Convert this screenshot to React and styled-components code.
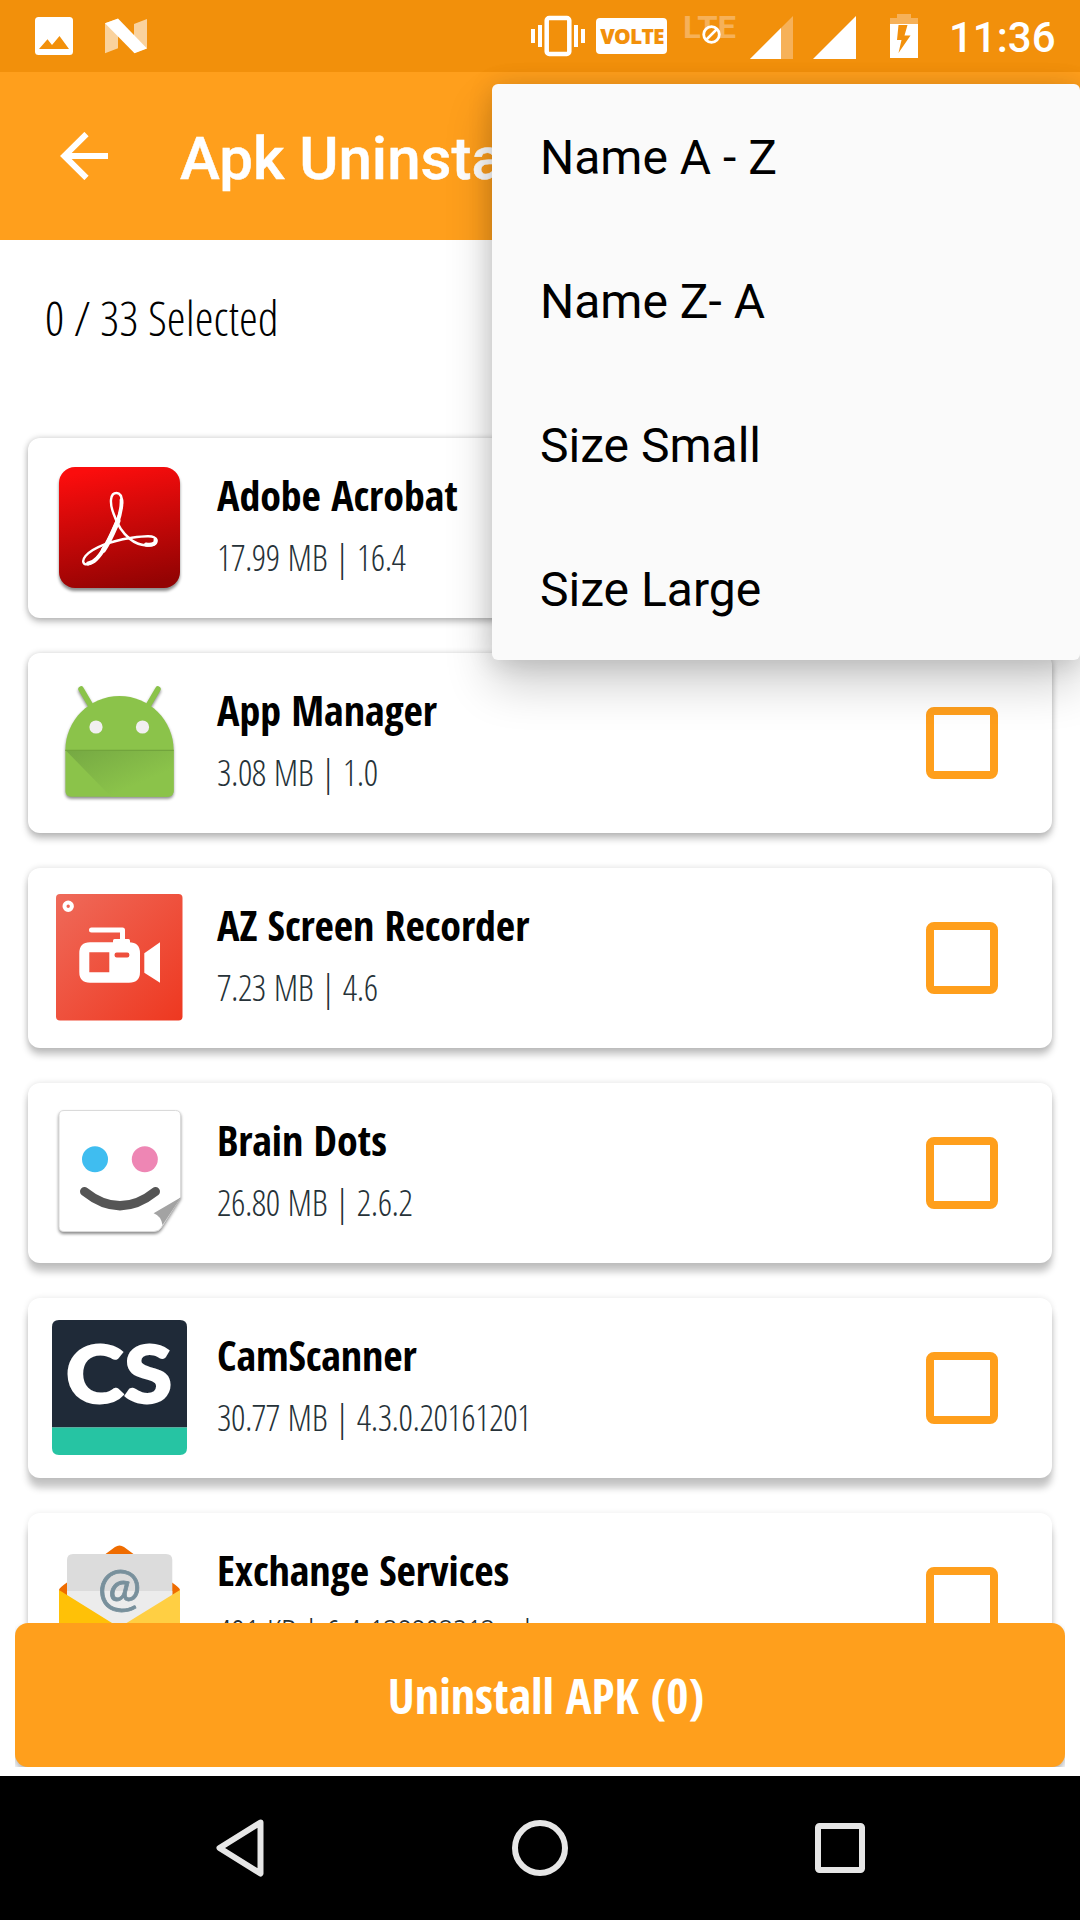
import React, { useState } from 'react';
import styled, { createGlobalStyle } from 'styled-components';

const ORANGE = "#FF9F1C";
const STATUS_ORANGE = "#F2900B";

const AdobeIcon = () => (
    <IconSvg viewBox="0 0 144 144">
        <defs>
            <linearGradient id="adobe" x1="0.4" y1="0" x2="0.6" y2="1">
                <stop offset="0" stopColor="#FB0D0D" />
                <stop offset="1" stopColor="#930303" />
            </linearGradient>
        </defs>
        <Raised $y={3}>
            <rect x="11" y="11" width="121" height="121" rx="16" fill="url(#adobe)" />
        </Raised>
        <g fill="none" stroke="#fff" strokeLinecap="round">
            <path strokeWidth="2.4" d="M68.5 37C62 37 61.5 47 65.5 57.5C68 65 73 76 82 83C91 90.5 108 92.5 108.3 84.5C108.5 78 93 80.5 82 82C63 85 45 91.5 37.5 100C33.5 105 35 109 40 108.3C48 107.5 58.5 89 64.5 75C70.5 61.5 74 53 74 47C74 41 72 37 68.5 37Z" />
            <path strokeWidth="5" d="M70 65C66 74 61.5 85.5 55.5 94" />
            <path strokeWidth="3.8" d="M73.5 44C74 52 71 62 69 68M57 91C52 100 46 107 40 107.5" />
            <path strokeWidth="4" d="M98 88.5C105 89.5 108.5 87.5 107.5 83.5" />
        </g>
    </IconSvg>
);

const AndroidIcon = () => (
    <IconSvg viewBox="0 0 144 144">
        <defs>
            <linearGradient id="fold" x1="0" y1="0" x2="1" y2="1">
                <stop offset="0" stopColor="#75A843" />
                <stop offset="0.7" stopColor="#8BC34A" />
            </linearGradient>
        </defs>
        <Raised>
            <g stroke="#8BC34A" strokeWidth="5.5" strokeLinecap="round">
                <path d="M33 18L43 35M110 18L100 35" />
            </g>
            <path fill="#8BC34A" d="M17.4 79C17.4 49 42 25 71.5 25S125.6 49 125.6 79V120Q125.6 125.7 119.6 125.7H23.4Q17.4 125.7 17.4 120Z" />
        </Raised>
        <path d="M17.4 79L63 125.7H119Q125.6 125.7 125.6 120V79Z" fill="url(#fold)" />
        <path d="M17.4 79.3H125.6" stroke="#72A43D" strokeWidth="1.2" />
        <circle cx="48" cy="56" r="6.6" fill="#F1EFF0" />
        <circle cx="94.5" cy="56" r="6.6" fill="#F1EFF0" />
    </IconSvg>
);

const RecorderIcon = () => (
    <IconSvg viewBox="0 0 144 144">
        <defs>
            <linearGradient id="recorder" x1="0" y1="0" x2="1" y2="1">
                <stop offset="0" stopColor="#EF6A5A" />
                <stop offset="1" stopColor="#EE3820" />
            </linearGradient>
        </defs>
        <rect x="8" y="8" width="126.5" height="126.5" rx="4" fill="url(#recorder)" />
        <circle cx="20.2" cy="20.3" r="3.7" fill="none" stroke="#fff" strokeWidth="4" />
        <path d="M43.5 44H74.5V55" fill="none" stroke="#fff" strokeWidth="5" strokeLinecap="round" strokeLinejoin="round" />
        <rect x="65" y="53" width="17" height="6" rx="1.5" fill="#fff" />
        <path fill="#fff" fillRule="evenodd" d="M42 56.3H81Q92 56.3 92 67.3V86Q92 96.7 81 96.7H42Q31.3 96.7 31.3 86V67.3Q31.3 56.3 42 56.3ZM41.3 66.3V86.3H61.3V66.3Z" />
        <rect x="66.6" y="66.5" width="14.7" height="5" rx="2" fill="#EE4F3D" />
        <path d="M96.3 67.3L112 56.3V96.7L96.3 86.7Z" fill="#fff" />
    </IconSvg>
);

const BrainDotsIcon = () => (
    <IconSvg viewBox="0 0 144 144">
        <Raised>
            <path d="M16 9.5H127.5Q132.5 9.5 132.5 14.5V96.3L113 127Q110.5 130.5 106 130.5H16Q11 130.5 11 125.5V14.5Q11 9.5 16 9.5Z" fill="#fff" stroke="#DADADA" strokeWidth="1" />
        </Raised>
        <path d="M133 96.3L105.6 112.3Q113 115 114.5 124Z" fill="#A3A3A3" />
        <circle cx="47" cy="58.3" r="13" fill="#3FBDF0" />
        <circle cx="96.8" cy="58.3" r="13" fill="#EE86B4" />
        <path d="M36.5 90.5Q72 119 107.5 90.5" fill="none" stroke="#555" strokeWidth="9" strokeLinecap="round" />
    </IconSvg>
);

const CamScannerIcon = () => (
    <IconSvg viewBox="0 0 144 144">
        <path d="M4 111.5V11Q4 4 11 4H132Q139 4 139 11V111.5Z" fill="#1F2A38" />
        <path d="M4 111.5H139V132Q139 139 132 139H11Q4 139 4 132Z" fill="#26C4A3" />
        <text x="17.5" y="87" fontFamily="Lato, sans-serif" fontWeight="900" fontSize="80" fill="#fff" stroke="#fff" strokeWidth="1.8" textLength="107" lengthAdjust="spacingAndGlyphs">CS</text>
    </IconSvg>
);

const ExchangeIcon = () => (
    <IconSvg viewBox="0 0 144 144">
        <path d="M11 59Q11 57 19 51.5L67 16Q71.5 13 76 16L124 51.5Q132 57 132 59V90H11Z" fill="#EF6C00" />
        <path d="M19 100V29Q19 23 25 23H118Q124.3 23 124.3 29V100Z" fill="#DCDCDC" />
        <path d="M19 60H124.3V100H19Z" fill="#ECECEC" />
        <path d="M11 59L64.5 92.3L71.5 96V132H11Z" fill="#FFC107" />
        <path d="M132 59L78 92.3L60 104V132H132Z" fill="#FFCF43" />
        <text x="71.5" y="75" fontFamily="Lato, sans-serif" fontWeight="400" fontSize="52" fill="#78909C" stroke="#78909C" strokeWidth="0.8" textAnchor="middle">@</text>
    </IconSvg>
);

const apps = [
    { name: "Adobe Acrobat", size: "17.99 MB", version: "16.4", Icon: AdobeIcon },
    { name: "App Manager", size: "3.08 MB", version: "1.0", Icon: AndroidIcon },
    { name: "AZ Screen Recorder", size: "7.23 MB", version: "4.6", Icon: RecorderIcon },
    { name: "Brain Dots", size: "26.80 MB", version: "2.6.2", Icon: BrainDotsIcon },
    { name: "CamScanner", size: "30.77 MB", version: "4.3.0.20161201", Icon: CamScannerIcon },
    { name: "Exchange Services", size: "491 KB", version: "6.4-138803213.release", Icon: ExchangeIcon },
];

const sortOptions = ["Name A - Z", "Name Z- A", "Size Small", "Size Large"];

function StatusIcons() {
    return (
        <StatusBar>
            <StatusSvg $gap={35} width="38" viewBox="0 0 38 72">
                <rect y="17" width="38" height="38" rx="3.5" fill="#fff" />
                <path d="M4 49L12.5 39.3L17 45L24.5 36L34 49Z" fill={STATUS_ORANGE} />
            </StatusSvg>
            <StatusSvg $gap={32} width="42" viewBox="0 0 42 72">
                <path d="M0 23.3V53.3L13 48.3V19ZM29 24L42 19V48.3L29 53Z" fill="#fff" opacity="0.6" />
                <path d="M0 23.3L13 18.5L42 48.5L29.5 53.3Z" fill="#fff" />
            </StatusSvg>
            <StatusSvg $gap={384} width="54" viewBox="0 0 54 72">
                <rect x="15.7" y="18" width="22.6" height="36" rx="2.5" fill="none" stroke="#fff" strokeWidth="4.5" />
                <path d="M0 29H4V43H0ZM7 25H11V47H7ZM43 25H47V47H43ZM50 29H54V43H50Z" fill="#fff" />
            </StatusSvg>
            <VolteBadge>VOLTE</VolteBadge>
            <StatusSvg $gap={17} width="52" viewBox="0 0 52 72">
                <text x="-1" y="38" fontFamily="Roboto, sans-serif" fontWeight="700" fontSize="32" fill="#F6B159" textLength="53" lengthAdjust="spacingAndGlyphs">LTE</text>
                <circle cx="27.5" cy="34.5" r="7.8" fill={STATUS_ORANGE} stroke="#fff" strokeWidth="2.8" />
                <path d="M22.5 39.5L32.5 29.5" stroke="#fff" strokeWidth="2.5" />
            </StatusSvg>
            <StatusSvg $gap={14} width="43" viewBox="0 0 43 72">
                <path d="M0 59L43 16V59Z" fill="#F6B159" />
                <path d="M0 59L31 28V59Z" fill="#fff" />
            </StatusSvg>
            <StatusSvg $gap={20} width="43" viewBox="0 0 43 72">
                <path d="M0 59L43 16V59Z" fill="#fff" />
            </StatusSvg>
            <StatusSvg $gap={34} width="28" viewBox="0 0 28 72">
                <path d="M0 18H7V14H21V18H28V24H0Z" fill="#F6B159" />
                <path d="M0 24H28V58H0Z" fill="#fff" />
                <path d="M8.5 25H17.5L14.5 35.5H20.5L8.5 53L11.5 40H7Z" fill={STATUS_ORANGE} />
            </StatusSvg>
            <Clock>11:36</Clock>
        </StatusBar>
    );
}

function App() {
    const [selected, setSelected] = useState([]);

    const toggle = (name) => {
        setSelected(selected.includes(name) ? selected.filter((n) => n !== name) : [...selected, name]);
    };

    return (
        <Screen>
            <GlobalStyle />
            <StatusIcons />
            <Toolbar>
                <svg width="48" height="48" viewBox="0 0 48 48" fill="none" stroke="#fff" strokeWidth="6">
                    <path d="M26.5 2L4.3 24L26.5 46M4.3 24H48" />
                </svg>
                <ToolbarTitle>Apk Uninstaller</ToolbarTitle>
            </Toolbar>
            <Content>
                <Selected>{selected.length} / 33 Selected</Selected>
                <List>
                    {apps.map(({ name, size, version, Icon }, i) => (
                        <Card key={name} $index={i}>
                            <Icon />
                            <Details>
                                <Name>{name}</Name>
                                <Meta>{size} | {version}</Meta>
                            </Details>
                            <Checkbox aria-label={name} $on={selected.includes(name)} onClick={() => toggle(name)} />
                        </Card>
                    ))}
                </List>
            </Content>
            <Footer>
                <UninstallButton>Uninstall APK ({selected.length})</UninstallButton>
            </Footer>
            <NavBar>
                <svg width="56" height="60" viewBox="0 0 56 60">
                    <path d="M48.5 4.5L7.5 30L48.5 55.5Z" />
                </svg>
                <svg width="56" height="60" viewBox="0 0 56 60">
                    <circle cx="28" cy="30" r="25" />
                </svg>
                <svg width="56" height="60" viewBox="0 0 56 60">
                    <rect x="6" y="8" width="44" height="44" rx="1.5" />
                </svg>
            </NavBar>
            <Menu>
                {sortOptions.map((option) => (
                    <MenuItem key={option}>{option}</MenuItem>
                ))}
            </Menu>
        </Screen>
    );
}

export default App;

const GlobalStyle = createGlobalStyle`
  * {
    box-sizing: border-box;
  }

  body {
    margin: 0;
    background: #fff;
  }
`;

const Screen = styled.div`
  position: relative;
  width: 1080px;
  height: 1920px;
  display: flex;
  flex-direction: column;
  overflow: hidden;
  background: #fff;
  font-family: "Open Sans Condensed", "Open Sans", sans-serif;
`;

const StatusBar = styled.div`
  display: flex;
  height: 72px;
  background: ${STATUS_ORANGE};
`;

const StatusSvg = styled.svg`
  flex: none;
  height: 72px;
  margin-left: ${props => props.$gap}px;
`;

const VolteBadge = styled.span`
  width: 71px;
  height: 36px;
  margin: 18px 0 0 11px;
  padding-left: 1px;
  border-radius: 4px;
  background: #fff;
  color: ${STATUS_ORANGE};
  font: 800 21px/36px "Open Sans", sans-serif;
  letter-spacing: -0.8px;
  text-align: center;
`;

const Clock = styled.span`
  margin-left: 31px;
  padding-top: 2px;
  color: #fff;
  font: 500 42px/72px Roboto, sans-serif;
`;

const Toolbar = styled.header`
  display: flex;
  align-items: center;
  height: 168px;
  padding-left: 60px;
  background: ${ORANGE};
`;

const ToolbarTitle = styled.h1`
  margin: 0 0 0 72px;
  padding-top: 5px;
  color: #fff;
  font: 500 60px/70px Roboto, sans-serif;
  -webkit-text-stroke: 0.5px #fff;
`;

const Content = styled.main`
  height: 1383px;
  flex: none;
  overflow: hidden;
`;

const Selected = styled.p`
  height: 198px;
  margin: 0;
  padding: 45px 0 0 45px;
  color: #000;
  font-family: "Open Sans Condensed Light", "Open Sans", sans-serif;
  font-size: 48px;
  font-stretch: 75%;
  font-weight: 300;
  line-height: 65px;
  word-spacing: 0.5px;
`;

const List = styled.div`
  display: flex;
  flex-direction: column;
  gap: 35px;
  padding: 0 28px;
`;

/* the drop shadow gets longer the further down the screen a card sits */
const Card = styled.div`
  display: flex;
  flex: none;
  height: 180px;
  padding: 18px 54px 0 20px;
  border-radius: 12px;
  background: #fff;
  box-shadow:
    0 ${props => 4 + props.$index * 1.5}px 7px rgba(0, 0, 0, 0.22),
    0 0 6px rgba(0, 0, 0, ${props => 0.18 - props.$index * 0.02});
`;

const IconSvg = styled.svg`
  flex: none;
  width: 144px;
  height: 144px;
`;

const Raised = styled.g`
  filter: drop-shadow(0 ${props => props.$y || 2}px 1.5px rgba(0, 0, 0, 0.45));
`;

const Details = styled.div`
  flex: 1;
  padding: 10px 0 0 25px;
`;

const Name = styled.h2`
  margin: 0;
  color: #000;
  font-size: 42px;
  font-weight: 700;
  letter-spacing: -0.06px;
  line-height: 57px;
`;

const Meta = styled.p`
  margin: 10px 0 0;
  color: #263238;
  font-family: "Open Sans Condensed Light", "Open Sans", sans-serif;
  font-size: 36px;
  font-stretch: 75%;
  font-weight: 300;
  letter-spacing: -0.45px;
  line-height: 49px;
  word-spacing: 1.5px;
`;

const Checkbox = styled.button`
  width: 72px;
  height: 72px;
  margin-top: 36px;
  padding: 0;
  border: 8px solid ${ORANGE};
  border-radius: 8px;
  background: ${props => props.$on ? ORANGE : "transparent"};
`;

const Footer = styled.div`
  height: 144px;
  margin: 0 15px 9px;
  overflow: hidden;
`;

const UninstallButton = styled.button`
  width: 100%;
  height: 144px;
  padding: 0 0 0 12px;
  border: 0;
  border-radius: 13px;
  background: ${ORANGE};
  box-shadow: 0 4px 6px rgba(0, 0, 0, 0.3);
  color: #fff;
  font-family: inherit;
  font-size: 48px;
  font-weight: 700;
`;

const NavBar = styled.nav`
  display: flex;
  align-items: center;
  justify-content: center;
  gap: 244px;
  height: 144px;
  background: #000;

  svg {
    fill: none;
    stroke: #E6E6E6;
    stroke-width: 6;
    stroke-linejoin: round;
  }
`;

const Menu = styled.ul`
  position: absolute;
  top: 84px;
  right: 0;
  width: 588px;
  margin: 0;
  padding: 0;
  border-radius: 6px;
  background: #FAFAFA;
  box-shadow: 0 24px 48px rgba(0, 0, 0, 0.2), 0 2px 26px rgba(0, 0, 0, 0.14);
  list-style: none;
`;

const MenuItem = styled.li`
  height: 144px;
  padding: 2px 0 0 48px;
  color: #000;
  font: 400 48px/144px Roboto, sans-serif;
`;
